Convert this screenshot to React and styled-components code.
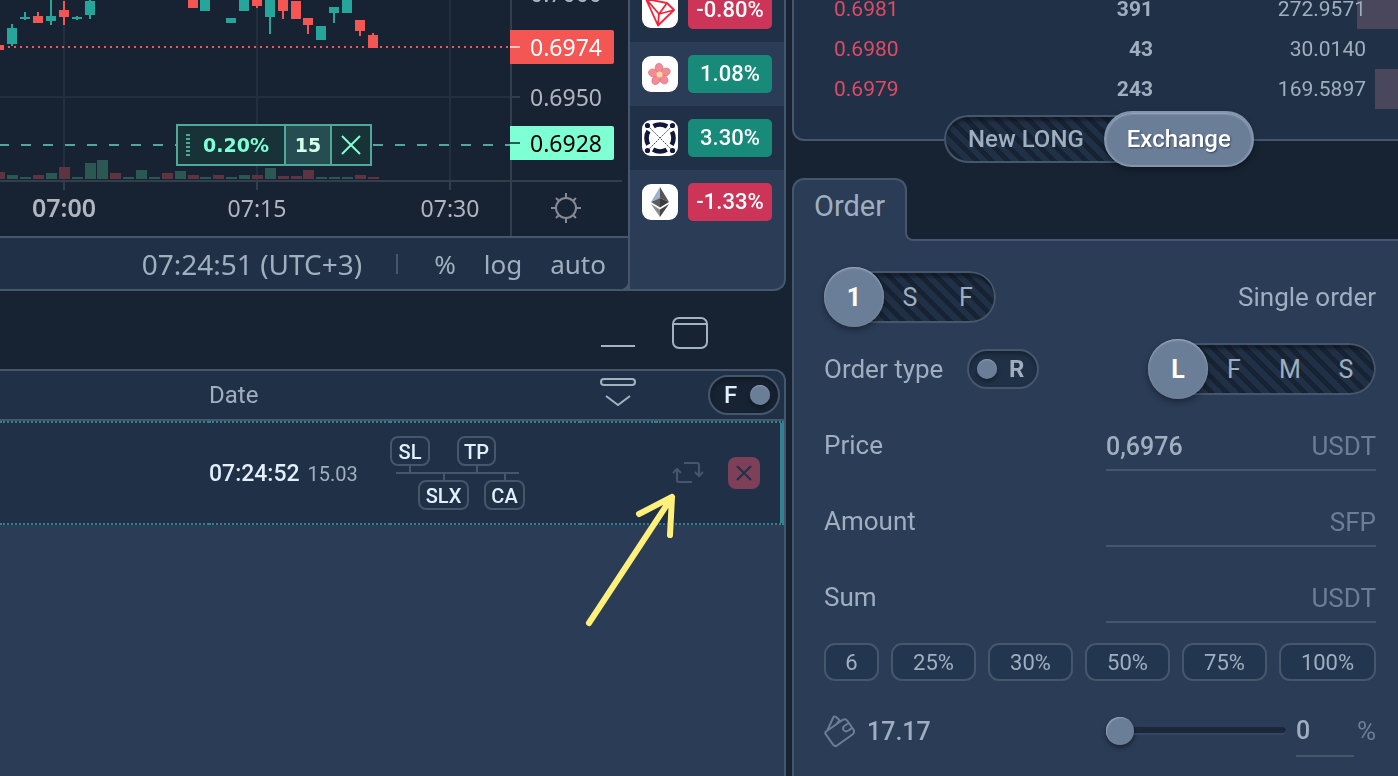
import React, { useState } from "react";
import styled, { createGlobalStyle, css } from "styled-components";

const GlobalStyle = createGlobalStyle`
  :root {
    --page: #172332;
    --dark: #203147;
    --light: #2b3c56;
    --line: #46566b;
    --knob: #6b7e98;
    --text: #a0afbf;
    --muted: #6b7e98;
    --bright: #e3efff;
    --teal: #32838f;
    --up: #26a69a;
    --down: #f35653;
    --mint: #7fffd4;
    --alert: #4fa898;
  }

  * {
    box-sizing: border-box;
  }

  body {
    margin: 0;
    background: var(--page);
    color: var(--text);
    font-family: Roboto, "Liberation Sans", sans-serif;
  }

  button,
  input {
    font: inherit;
    color: inherit;
  }

  button {
    padding: 0;
    border: 0;
    background: none;
    cursor: pointer;
  }

  button > svg {
    display: block;
  }
`;

const Page = styled.div`
  display: grid;
  grid-template-columns: minmax(0, 786fr) minmax(0, 606fr);
  column-gap: 6px;
  height: 100vh;
  overflow: hidden;
`;

const Column = styled.div`
  display: flex;
  flex-direction: column;
  min-width: 0;
  min-height: 0;
`;

const VisuallyHidden = styled.input`
  position: absolute;
  opacity: 0;
  width: 1px;
  height: 1px;
  margin: 0;
`;

/* chart */

const TopPanel = styled.section`
  display: flex;
  border: solid var(--line);
  border-width: 0 2px 2px 0;
  border-radius: 0 0 12px 0;
  background: var(--line);
  overflow: hidden;
`;

const ChartBox = styled.div`
  position: relative;
  flex: 1;
  min-width: 0;
  margin-right: 2px;
  border-radius: 0 0 8px 0;
  background: var(--page);
  overflow: hidden;
`;

const ChartSvg = styled.svg`
  display: block;
  width: 100%;
  height: 236px;
`;

const AxisText = styled.text`
  font-family: "Noto Sans", sans-serif;
  font-size: ${(p) => (p.$bold ? 25 : 23)}px;
  font-weight: ${(p) => (p.$bold ? 600 : 400)};
  text-anchor: middle;
  fill: ${(p) => p.$color || "#b2b5be"};
`;

const AlertTag = styled.div`
  position: absolute;
  top: 124px;
  right: 256px;
  display: flex;
  height: 42px;
  border: 2px solid var(--alert);
  background: #173338;
  color: var(--mint);
  font: bold 19px "DejaVu Sans", sans-serif;
`;

const AlertCell = styled.div`
  display: flex;
  align-items: center;
  justify-content: center;
  gap: 13px;
  width: ${(p) => p.$width};
  padding-right: ${(p) => (p.$filled ? 0 : "7px")};
  border-right: 2px solid var(--alert);
  background: ${(p) => (p.$filled ? "#264e52" : "none")};
  color: ${(p) => (p.$filled ? "#d8ffe9" : "inherit")};
  line-height: 34px;
`;

const Grip = styled.span`
  width: 4px;
  height: 22px;
  background: repeating-linear-gradient(
    var(--alert) 0 2px,
    transparent 2px 4px
  );
`;

const AlertClose = styled.button`
  display: flex;
  align-items: center;
  justify-content: center;
  width: 38px;
`;

const ChartBar = styled.div`
  display: flex;
  align-items: center;
  justify-content: flex-end;
  height: 53px;
  padding-right: 22px;
  border-top: 2px solid var(--line);
  background: var(--dark);
  font-family: "Noto Sans", sans-serif;
  font-size: 26px;
`;

const Clock = styled.span`
  font-size: 28px;
`;

const Divider = styled.span`
  width: 2px;
  height: 20px;
  margin: 0 36px 0 34px;
  background: var(--line);
`;

const ScaleButtons = styled.div`
  display: flex;
  gap: 28px;
`;

/* watch list */

const WatchList = styled.ul`
  flex: 0 0 154px;
  height: 289px;
  margin: 0;
  padding: 0;
  list-style: none;
  background: var(--light);
  overflow: hidden;
`;

const WatchItem = styled.li`
  display: flex;
  align-items: center;
  gap: 10px;
  height: 64px;
  padding: 0 12px;

  &:first-child {
    margin-top: -22px;
  }

  &:nth-child(odd) {
    background: var(--dark);
  }
`;

const CoinIcon = styled.svg`
  flex: none;
  width: 36px;
  height: 36px;
  border-radius: 9px;
  background: #fff;
`;

const Change = styled.span`
  flex: 1;
  height: 38px;
  border-radius: 5px;
  background: ${(p) => (p.$up ? "#188a79" : "#cc3558")};
  color: #fff;
  font-size: 22px;
  font-weight: 500;
  line-height: 38px;
  text-align: center;
`;

/* orders */

const WindowButtons = styled.div`
  display: flex;
  align-items: center;
  justify-content: flex-end;
  gap: 36px;
  height: 78px;
  padding: 6px 78px 0 0;
`;

const OrdersPanel = styled.section`
  position: relative;
  flex: 1;
  min-height: 0;
  border: solid var(--line);
  border-width: 2px 2px 0 0;
  border-radius: 0 12px 0 0;
  background: var(--light);
`;

const OrdersTable = styled.table`
  width: 100%;
  table-layout: fixed;
  border-spacing: 0;

  th,
  td {
    padding: 0;
    text-align: left;
    background: var(--dark);
  }

  th {
    height: 50px;
    border-bottom: 2px solid var(--line);
    font-size: 24px;
    font-weight: 400;
  }

  th:last-child {
    border-radius: 0 10px 0 0;
  }

  td {
    height: 104px;
    border: dotted var(--teal);
    border-width: 2px 0;
  }

  td:last-child {
    box-shadow: inset -4px 0 0 var(--teal);
  }
`;

const Time = styled.span`
  color: var(--bright);
  font-size: 23px;
  font-weight: 500;
`;

const Day = styled.span`
  margin-left: 8px;
  font-size: 20px;
`;

const TagTree = styled.div`
  display: flex;
  flex-direction: column;
  width: 135px;
`;

const TagRow = styled.div`
  display: flex;
  gap: ${(p) => p.$gap};
  padding-left: ${(p) => p.$indent || 0};
`;

const TagStem = styled.div`
  width: 123px;
  height: 2px;
  margin: 6px;
  background: var(--line);
`;

const Tag = styled.button`
  position: relative;
  width: ${(p) => p.$width};
  height: 30px;
  border: 2px solid var(--line);
  border-radius: 8px;
  color: var(--bright);
  font-size: 20px;
  font-weight: 500;
  line-height: 28px;

  &::after {
    content: "";
    position: absolute;
    left: 50%;
    ${(p) => (p.$below ? "bottom: 100%" : "top: 100%")};
    width: 2px;
    height: 8px;
    margin-left: -1px;
    background: var(--line);
  }
`;

const Actions = styled.div`
  display: flex;
  align-items: center;
  justify-content: flex-end;
  gap: 24px;
  padding-right: 24px;
`;

const CloseOrder = styled.button`
  display: flex;
  align-items: center;
  justify-content: center;
  width: 32px;
  height: 32px;
  border-radius: 8px;
  background: #7e4059;
`;

const Pointer = styled.svg`
  position: absolute;
  top: 119px;
  right: 94px;
  width: 110px;
  height: 140px;
  pointer-events: none;
`;

/* switches */

const ToggleLabel = styled.label`
  position: relative;
  display: inline-flex;
  align-items: center;
  justify-content: space-between;
  flex-direction: ${(p) => (p.$on ? "row-reverse" : "row")};
  width: 72px;
  height: 40px;
  padding: ${(p) => (p.$on ? "0 8px 0 14px" : "0 13px 0 8px")};
  border: 2px solid var(--line);
  border-radius: 20px;
  background: ${(p) => (p.$on ? "#172332" : "var(--dark)")};
  box-shadow: inset 0 3px 4px rgba(0, 0, 0, 0.3);
  color: ${(p) => (p.$on ? "var(--bright)" : "var(--text)")};
  font-size: 24px;
  font-weight: ${(p) => (p.$on ? 500 : 700)};
  cursor: pointer;

  &::before {
    content: "";
    width: 20px;
    height: 20px;
    border-radius: 50%;
    background: var(--knob);
    box-shadow: inset 0 1px 1px #8b9bb2, 0 3px 5px rgba(0, 0, 0, 0.35);
  }
`;

const Toggle = ({ label, name, defaultOn = false }) => {
  const [on, setOn] = useState(defaultOn);
  return (
    <ToggleLabel $on={on}>
      <VisuallyHidden
        type="checkbox"
        name={name}
        checked={on}
        onChange={() => setOn(!on)}
      />
      {label}
    </ToggleLabel>
  );
};

const Track = styled.div`
  position: relative;
  display: flex;
  align-items: center;
  height: ${(p) => (p.$wide ? 48 : 52)}px;
  padding: 0 ${(p) => (p.$wide ? 0 : 2)}px;
  border-radius: 26px;
  background: repeating-linear-gradient(
    45deg,
    #172332 0 5px,
    var(--dark) 5px 11px
  );
  box-shadow: inset 0 0 0 2px var(--line), inset 0 6px 3px rgba(12, 18, 28, 0.5);
`;

const activeOption = css`
  background: var(--knob);
  color: #fff;
  box-shadow: inset 0 1px 2px #a3b1c4, 0 3px 6px rgba(0, 0, 0, 0.35);
`;

const Option = styled.label`
  display: flex;
  flex: none;
  align-items: center;
  justify-content: center;
  width: 56px;
  height: 60px;
  border-radius: 30px;
  font-size: 25px;
  cursor: pointer;

  ${(p) =>
    p.$active &&
    css`
      width: 60px;
      margin: 0 -2px;
      font-weight: 700;
      ${activeOption}
    `}
`;

const WideOption = styled.label`
  display: flex;
  flex: none;
  align-items: center;
  justify-content: center;
  height: 56px;
  padding: 0 20px 0 24px;
  border-radius: 28px;
  font-size: 24px;
  font-weight: 500;
  cursor: pointer;

  ${(p) =>
    p.$active &&
    css`
      ${activeOption}
      padding: 0 21px;
      border: 2px solid #8394ac;
      text-shadow: 1px 1px 2px rgba(23, 35, 50, 0.6);
    `}
`;

const Segmented = ({ name, options, initial, wide }) => {
  const [value, setValue] = useState(initial);
  const Item = wide ? WideOption : Option;
  return (
    <Track role="radiogroup" aria-label={name} $wide={wide}>
      {options.map((option, i) => (
        <Item key={i} $active={i === value}>
          <VisuallyHidden
            type="radio"
            name={name}
            checked={i === value}
            onChange={() => setValue(i)}
          />
          {option}
        </Item>
      ))}
    </Track>
  );
};

/* order book */

const Book = styled.section`
  position: relative;
  height: 141px;
  border: solid var(--line);
  border-width: 0 0 2px 2px;
  border-radius: 0 0 0 12px;
  background: var(--dark);
`;

const BookRows = styled.div`
  height: 112px;
  overflow: hidden;
`;

const BookTable = styled.table`
  width: 100%;
  margin-top: -11px;
  table-layout: fixed;
  border-spacing: 0;
  font-size: 21px;

  td {
    position: relative;
    height: 40px;
    padding: 0;
    text-align: right;
  }

  td:first-child {
    padding-left: 40px;
    color: #e04a64;
    text-align: left;
  }

  td:nth-child(2) {
    font-weight: 700;
  }

  td:last-child {
    padding-right: 32px;
  }
`;

const Depth = styled.span`
  position: absolute;
  top: 0;
  right: 0;
  height: 40px;
  background: #4a465c;
  mix-blend-mode: lighten;
`;

const BookSwitch = styled.div`
  position: absolute;
  top: 115px;
  left: 150px;
`;

/* order form */

const Tab = styled.h2`
  position: relative;
  z-index: 1;
  align-self: flex-start;
  height: 63px;
  margin: 37px 0 -2px;
  padding: 0 20px;
  border: 2px solid var(--line);
  border-bottom: 0;
  border-radius: 12px 12px 0 0;
  background: var(--light);
  font-size: 29px;
  font-weight: 400;
  line-height: 52px;

  &::after {
    content: "";
    position: absolute;
    bottom: 0;
    left: 100%;
    width: 10px;
    height: 10px;
    border: solid var(--line);
    border-width: 0 0 2px 2px;
    border-radius: 0 0 0 8px;
    background: var(--page);
    box-shadow: -2px 3px 0 var(--light);
  }
`;

const OrderForm = styled.form`
  flex: 1;
  padding: 20px 22px 0 30px;
  border: solid var(--line);
  border-width: 2px 0 0 2px;
  background: var(--light);
  font-size: 26px;
`;

const FormRow = styled.div`
  display: flex;
  align-items: center;
  gap: 24px;
  height: 72px;
`;

const Push = styled.div`
  margin-left: auto;
`;

const Fields = styled.div`
  display: grid;
  gap: 28px;
  padding-top: 18px;
`;

const Field = styled.div`
  display: grid;
  grid-template-columns: minmax(0, 282fr) minmax(0, 270fr);
  align-items: center;
  height: 48px;

  label {
    padding-bottom: 4px;
  }
`;

const FieldBox = styled.div`
  display: flex;
  align-items: center;
  height: 100%;
  border-bottom: 2px solid var(--line);
`;

const TextInput = styled.input`
  flex: 1;
  min-width: 0;
  width: 100%;
  padding: 0;
  border: 0;
  outline: 0;
  background: none;
  font-size: 25px;
  font-weight: 500;
`;

const Unit = styled.span`
  flex: none;
  min-width: 22px;
  color: var(--muted);
  text-align: right;
`;

const Presets = styled.div`
  display: grid;
  grid-template-columns: 55fr repeat(4, 85fr) 97fr;
  gap: 12px;
  margin-top: 20px;
`;

const Preset = styled.button`
  height: 38px;
  border: 2px solid var(--line);
  border-radius: 11px;
  background: #23364f;
  font-size: 22px;
`;

const Balance = styled.div`
  display: grid;
  grid-template-columns: minmax(0, 282fr) minmax(0, 270fr);
  align-items: center;
  height: 52px;
  margin-top: 24px;
`;

const Wallet = styled.div`
  display: flex;
  align-items: center;
  gap: 11px;
  font-size: 25px;
  font-weight: 500;
`;

const SliderBox = styled.div`
  display: flex;
  align-items: center;
  height: 52px;
`;

const PercentBox = styled.div`
  flex: none;
  width: 58px;
  height: 100%;
  margin-left: 10px;
  border-bottom: 2px solid var(--line);

  ${TextInput} {
    height: 100%;
  }
`;

const Slider = styled.input`
  flex: 1;
  min-width: 0;
  height: 28px;
  margin: 0;
  appearance: none;
  background: none;

  &::-webkit-slider-runnable-track {
    height: 8px;
    border-radius: 4px;
    background: #1b283a;
    box-shadow: inset 0 -2px 0 #374762;
  }

  &::-webkit-slider-thumb {
    appearance: none;
    width: 28px;
    height: 28px;
    margin-top: -10px;
    border-radius: 50%;
    background: var(--knob);
    box-shadow: inset 1px 1px 1px #93a2b7, 0 3px 5px rgba(0, 0, 0, 0.4);
  }
`;

// [x, body top, body bottom, wick top, wick bottom, direction]
const candles = [
  [-6, 45, 50, 45, 50, "down"],
  [7, 28, 44, 24, 46, "up"],
  [20, 17, 19, 12, 20, "up"],
  [33, 16, 23, 12, 23, "down"],
  [46, 16, 21, 0, 25, "up"],
  [59, 10, 17, 1, 25, "down"],
  [72, 17, 19, 16, 20, "up"],
  [85, 1, 15, 0, 19, "up"],
  [188, 0, 8, 0, 8, "down"],
  [200, 0, 11, 0, 11, "up"],
  [226, 18, 23, 18, 23, "up"],
  [239, 0, 11, 0, 11, "up"],
  [252, 0, 6, 0, 8, "down"],
  [265, 0, 17, 0, 34, "up"],
  [278, 0, 11, 0, 19, "down"],
  [291, 1, 19, 1, 19, "down"],
  [303, 18, 25, 18, 34, "down"],
  [316, 26, 40, 26, 40, "up"],
  [329, 7, 13, 7, 23, "up"],
  [342, 0, 13, 0, 13, "up"],
  [355, 20, 31, 20, 36, "down"],
  [368, 35, 48, 33, 48, "down"],
];

// [x, height, direction]
const volumes = [
  [-6, 7, "down"], [7, 4, "up"], [20, 2, "up"], [33, 4, "down"],
  [46, 6, "up"], [59, 12, "down"], [72, 2, "up"], [85, 16, "up"],
  [97, 19, "up"], [110, 6, "down"], [123, 2, "up"], [136, 9, "up"],
  [149, 2, "up"], [162, 6, "down"], [175, 8, "up"], [188, 4, "down"],
  [200, 2, "up"], [213, 4, "down"], [226, 2, "up"], [239, 4, "up"],
  [252, 4, "down"], [265, 11, "up"], [278, 3, "down"], [291, 3, "down"],
  [303, 9, "down"], [316, 2, "up"], [329, 2, "up"], [342, 2, "up"],
  [355, 4, "down"], [368, 2, "down"],
];

const Chart = () => (
  <ChartSvg viewBox="0 0 628 236" preserveAspectRatio="xMaxYMin slice">
    <g fill="#222f3e">
      <rect x="63" y="0" width="2" height="180" />
      <rect x="256" y="0" width="2" height="180" />
      <rect x="449" y="0" width="2" height="180" />
      <rect x="0" y="96" width="510" height="2" />
    </g>
    {volumes.map(([x, h, dir]) => (
      <rect
        key={x}
        x={x}
        y={179 - h}
        width="11"
        height={h}
        fill={dir === "up" ? "#2c5853" : "#5e3440"}
      />
    ))}
    <g fill="#323e4c">
      <rect x="0" y="180" width="622" height="2" />
      <rect x="510" y="0" width="2" height="236" />
      <rect x="63" y="182" width="2" height="8" />
      <rect x="256" y="182" width="2" height="8" />
      <rect x="449" y="182" width="2" height="8" />
      <rect x="512" y="96" width="8" height="2" />
    </g>
    {candles.map(([x, top, bottom, high, low, dir]) => (
      <g key={x} fill={`var(--${dir})`}>
        <rect x={x} y={top} width="10" height={bottom - top} />
        <rect x={x + 4} y={high} width="2" height={low - high} />
      </g>
    ))}
    <path d="M8 47H510" stroke="var(--down)" strokeWidth="2" strokeDasharray="2 4" />
    <path d="M-1 145H510" stroke="var(--alert)" strokeWidth="2" strokeDasharray="10 12" />
    <path d="M510 30h102a2 2 0 0 1 2 2v30a2 2 0 0 1-2 2H510z" fill="var(--down)" />
    <path d="M510 126h102a2 2 0 0 1 2 2v30a2 2 0 0 1-2 2H510z" fill="var(--mint)" />
    <rect x="510" y="46" width="10" height="2" fill="#fbc4c3" />
    <rect x="510" y="142" width="10" height="2" fill="#2c5b56" />
    <AxisText x="566" y="2">0.7000</AxisText>
    <AxisText x="566" y="56" $color="#fff">0.6974</AxisText>
    <AxisText x="566" y="106">0.6950</AxisText>
    <AxisText x="566" y="152" $color="#000">0.6928</AxisText>
    <AxisText x="64" y="217" $bold>07:00</AxisText>
    <AxisText x="257" y="217">07:15</AxisText>
    <AxisText x="450" y="217">07:30</AxisText>
    <g stroke="#868993" strokeWidth="2" fill="none">
      <circle cx="566" cy="208" r="10" />
      <path d="M566 193v5M566 218v5M551 208h5M576 208h5M556 198l3 3M573 215l3 3M576 198l-3 3M559 215l-3 3" />
    </g>
  </ChartSvg>
);

const TronIcon = () => (
  <CoinIcon viewBox="0 0 36 36">
    <path
      d="M4 7l21 4 7 7-16 15.500zM4 7l13 15 15-4M25 11l-8 11-1 11"
      fill="none"
      stroke="#f5233c"
      strokeWidth="1.8"
      strokeLinejoin="round"
    />
  </CoinIcon>
);

const SakuraIcon = () => (
  <CoinIcon viewBox="0 0 36 36">
    <g fill="#f28b96" stroke="#d9707d" strokeWidth="0.6">
      {[0, 72, 144, 216, 288].map((angle) => (
        <ellipse
          key={angle}
          cx="17.5"
          cy="12"
          rx="3.9"
          ry="4.8"
          transform={`rotate(${angle - 4} 17.5 18.5)`}
        />
      ))}
    </g>
    <circle cx="17.5" cy="18.5" r="3" fill="#f9dc97" />
  </CoinIcon>
);

const RingIcon = () => (
  <CoinIcon viewBox="0 0 36 36">
    <circle
      cx="18"
      cy="18"
      r="13.5"
      fill="none"
      stroke="#12163a"
      strokeWidth="4.6"
      strokeDasharray="14.2 7"
      strokeDashoffset="7.1"
    />
    <path d="M6 6l24 24M30 6L6 30" stroke="#3a3d58" strokeWidth="0.9" strokeDasharray="2 1" />
    <g fill="#12163a">
      <circle cx="5.5" cy="5.5" r="2.6" />
      <circle cx="30.5" cy="5.5" r="2.6" />
      <circle cx="5.5" cy="30.5" r="2.6" />
      <circle cx="30.5" cy="30.5" r="2.6" />
    </g>
  </CoinIcon>
);

const EtherIcon = () => (
  <CoinIcon viewBox="0 0 36 36">
    <path d="M18 3L9 18l9-4z" fill="#9db0cc" />
    <path d="M18 3l9 15-9-4z" fill="#555" />
    <path d="M9 18l9-4v9.500z" fill="#5c5e62" />
    <path d="M27 18l-9-4v9.500z" fill="#3c3c3d" />
    <path d="M9 20l9 5.500V33z" fill="#8c8c8c" />
    <path d="M27 20l-9 5.500V33z" fill="#454648" />
  </CoinIcon>
);

const coins = [
  { id: "tron", icon: <TronIcon />, change: "-0.80%" },
  { id: "sakura", icon: <SakuraIcon />, change: "1.08%", up: true },
  { id: "ring", icon: <RingIcon />, change: "3.30%", up: true },
  { id: "ether", icon: <EtherIcon />, change: "-1.33%" },
];

const asks = [
  { price: "0.6981", amount: "391", total: "272.9571", depth: 41 },
  { price: "0.6980", amount: "43", total: "30.0140", depth: 0 },
  { price: "0.6979", amount: "243", total: "169.5897", depth: 23 },
];

const presets = ["6", "25%", "30%", "50%", "75%", "100%"];

const ChartPanel = () => (
  <TopPanel>
    <ChartBox>
      <Chart />
      <AlertTag>
        <AlertCell $width="108px">
          <Grip />
          0.20%
        </AlertCell>
        <AlertCell $width="46px" $filled>
          15
        </AlertCell>
        <AlertClose aria-label="Remove alert">
          <svg width="20" height="20" viewBox="0 0 20 20">
            <path d="M1 1l18 18M19 1L1 19" stroke="currentColor" strokeWidth="2" />
          </svg>
        </AlertClose>
      </AlertTag>
      <ChartBar>
        <Clock>07:24:51 (UTC+3)</Clock>
        <Divider />
        <ScaleButtons>
          <button>%</button>
          <button>log</button>
          <button>auto</button>
        </ScaleButtons>
      </ChartBar>
    </ChartBox>
    <WatchList>
      {coins.map(({ id, icon, change, up }) => (
        <WatchItem key={id}>
          {icon}
          <Change $up={up}>{change}</Change>
        </WatchItem>
      ))}
    </WatchList>
  </TopPanel>
);

const Orders = () => (
  <OrdersPanel>
    <OrdersTable>
      <colgroup>
        <col />
        <col width="181" />
        <col width="190" />
        <col width="76" />
        <col width="128" />
      </colgroup>
      <thead>
        <tr>
          <th />
          <th>Date</th>
          <th />
          <th style={{ textAlign: "center" }}>
            <button aria-label="Collapse rows">
              <svg width="36" height="28" viewBox="0 0 36 28" fill="none" stroke="#a3b2c0" strokeWidth="2">
                <rect x="1" y="1" width="34" height="6" rx="3" />
                <path d="M6 18l12 9 12-9" />
              </svg>
            </button>
          </th>
          <th style={{ textAlign: "right", paddingRight: 4 }}>
            <Toggle label="F" name="filter" defaultOn />
          </th>
        </tr>
      </thead>
      <tbody>
        <tr>
          <td />
          <td>
            <Time>07:24:52</Time>
            <Day>15.03</Day>
          </td>
          <td>
            <TagTree>
              <TagRow $gap="27px">
                <Tag $width="40px">SL</Tag>
                <Tag $width="39px">TP</Tag>
              </TagRow>
              <TagStem />
              <TagRow $gap="15px" $indent="28px">
                <Tag $width="51px" $below>SLX</Tag>
                <Tag $width="41px" $below>CA</Tag>
              </TagRow>
            </TagTree>
          </td>
          <td />
          <td>
            <Actions>
              <button aria-label="Repeat order">
                <svg width="32" height="22" viewBox="0 0 32 22" fill="none" stroke="#46566b" strokeWidth="2">
                  <path d="M12 1h13a2 2 0 0 1 2 2v11M23 10l4 4 4-4" />
                  <path d="M20 20H7a2 2 0 0 1-2-2V8M1 11l4-4 4 4" />
                </svg>
              </button>
              <CloseOrder aria-label="Cancel order">
                <svg width="16" height="16" viewBox="0 0 16 16">
                  <path d="M1 1l14 14M15 1L1 15" stroke="#203147" strokeWidth="2" />
                </svg>
              </CloseOrder>
            </Actions>
          </td>
        </tr>
      </tbody>
    </OrdersTable>
    <Pointer viewBox="0 0 110 140">
      <path
        d="M9 133L92 7M59 24L92 7L90 45"
        fill="none"
        stroke="#fff07c"
        strokeWidth="6"
        strokeLinecap="round"
        strokeLinejoin="round"
      />
    </Pointer>
  </OrdersPanel>
);

const OrderBook = () => (
  <Book>
    <BookRows>
      <BookTable>
        <colgroup>
          <col />
          <col width="160" />
          <col width="245" />
        </colgroup>
        <tbody>
          {asks.map(({ price, amount, total, depth }) => (
            <tr key={price}>
              <td>{price}</td>
              <td>{amount}</td>
              <td>
                {total}
                <Depth style={{ width: depth }} />
              </td>
            </tr>
          ))}
        </tbody>
      </BookTable>
    </BookRows>
    <BookSwitch>
      <Segmented name="mode" options={["New LONG", "Exchange"]} initial={1} wide />
    </BookSwitch>
  </Book>
);

const InputField = ({ id, label, unit, defaultValue }) => (
  <Field>
    <label htmlFor={id}>{label}</label>
    <FieldBox>
      <TextInput id={id} defaultValue={defaultValue} />
      <Unit>{unit}</Unit>
    </FieldBox>
  </Field>
);

const OrderPanel = () => {
  const [percent, setPercent] = useState("0");
  const onPercent = (e) => setPercent(e.target.value);

  return (
    <>
      <Tab>Order</Tab>
      <OrderForm onSubmit={(e) => e.preventDefault()}>
        <FormRow>
          <Segmented name="count" options={["1", "S", "F"]} initial={0} />
          <Push>Single order</Push>
        </FormRow>
        <FormRow>
          <span>Order type</span>
          <Toggle label="R" name="reduce" />
          <Push>
            <Segmented name="type" options={["L", "F", "M", "S"]} initial={0} />
          </Push>
        </FormRow>
        <Fields>
          <InputField id="price" label="Price" unit="USDT" defaultValue="0,6976" />
          <InputField id="amount" label="Amount" unit="SFP" />
          <InputField id="sum" label="Sum" unit="USDT" />
        </Fields>
        <Presets>
          {presets.map((label) => (
            <Preset key={label} type="button">
              {label}
            </Preset>
          ))}
        </Presets>
        <Balance>
          <Wallet>
            <svg width="32" height="32" viewBox="0 0 32 32" fill="none" stroke="#6b7e98" strokeWidth="2" strokeLinejoin="round">
              <path d="M2 16.500L18.500 5q3-2 5 1l5.500 8q2.500 3-.5 5.500L13 30.500q-2 1.500-4-1L2 19.500q-1.500-1.500 0-3z" />
              <path d="M3.500 15L9 3q1-2.500 3-1l5 4.500M12.500 9l3-4" />
              <path d="M25 8l-4 2.500q-3 2-1.500 4.500 2 2.500 5 .5l4-3" />
            </svg>
            17.17
          </Wallet>
          <SliderBox>
            <Slider
              type="range"
              min="0"
              max="100"
              aria-label="Share of balance"
              value={percent}
              onChange={onPercent}
            />
            <PercentBox>
              <TextInput aria-label="Percent" value={percent} onChange={onPercent} />
            </PercentBox>
            <Unit>%</Unit>
          </SliderBox>
        </Balance>
      </OrderForm>
    </>
  );
};

const App = () => (
  <>
    <GlobalStyle />
    <Page>
      <Column>
        <ChartPanel />
        <WindowButtons>
          <button aria-label="Minimize">
            <svg width="36" height="34" viewBox="0 0 36 34">
              <path d="M1 30h34" stroke="#a3b2c0" strokeWidth="2" />
            </svg>
          </button>
          <button aria-label="Maximize">
            <svg width="36" height="32" viewBox="0 0 36 32" fill="none" stroke="#a3b2c0" strokeWidth="2">
              <rect x="1" y="1" width="34" height="30" rx="6" />
              <path d="M1 7h34" />
            </svg>
          </button>
        </WindowButtons>
        <Orders />
      </Column>
      <Column>
        <OrderBook />
        <OrderPanel />
      </Column>
    </Page>
  </>
);

export default App;
